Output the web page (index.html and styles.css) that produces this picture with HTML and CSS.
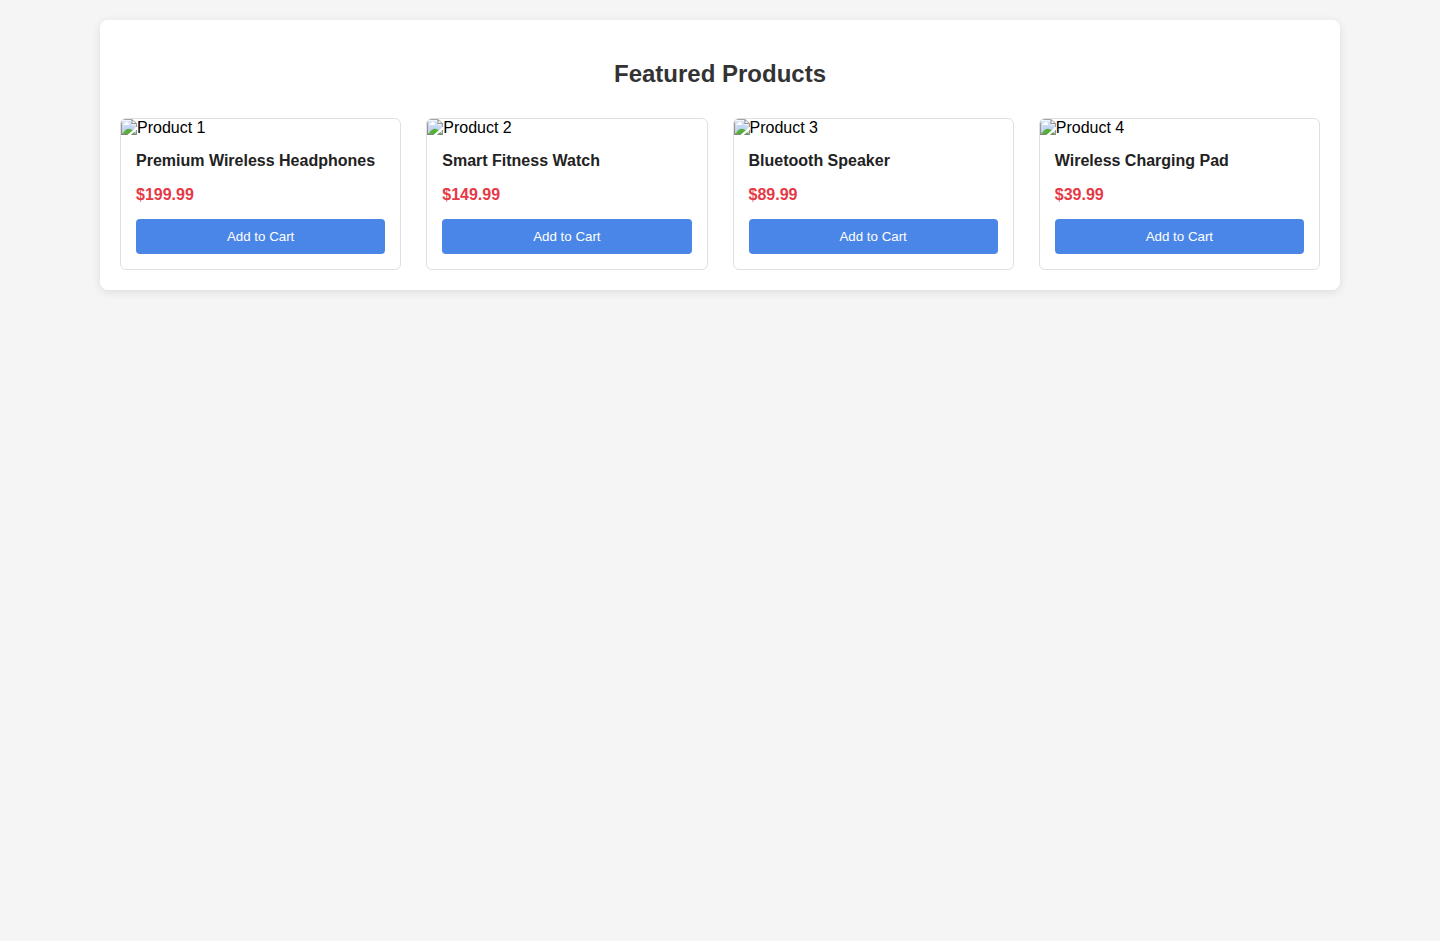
FILE: index.html
```html
<!DOCTYPE html>
<html lang="en">
<head>
<meta charset="UTF-8">
<meta name="viewport" content="width=device-width, initial-scale=1.0">
<title>Featured Products</title>
<link rel="stylesheet" href="styles.css">
</head>
<body>
<main class="container">
  <h2 class="title">Featured Products</h2>
  <div class="grid">
    <article class="card">
      <img class="card-image" src="product1.jpg" alt="Product 1">
      <div class="card-info">
        <h3 class="card-name">Premium Wireless Headphones</h3>
        <p class="card-price">$199.99</p>
        <button class="card-button" type="button">Add to Cart</button>
      </div>
    </article>
    <article class="card">
      <img class="card-image" src="product2.jpg" alt="Product 2">
      <div class="card-info">
        <h3 class="card-name">Smart Fitness Watch</h3>
        <p class="card-price">$149.99</p>
        <button class="card-button" type="button">Add to Cart</button>
      </div>
    </article>
    <article class="card">
      <img class="card-image" src="product3.jpg" alt="Product 3">
      <div class="card-info">
        <h3 class="card-name">Bluetooth Speaker</h3>
        <p class="card-price">$89.99</p>
        <button class="card-button" type="button">Add to Cart</button>
      </div>
    </article>
    <article class="card">
      <img class="card-image" src="product4.jpg" alt="Product 4">
      <div class="card-info">
        <h3 class="card-name">Wireless Charging Pad</h3>
        <p class="card-price">$39.99</p>
        <button class="card-button" type="button">Add to Cart</button>
      </div>
    </article>
  </div>
</main>
</body>
</html>
```
FILE: styles.css
```css
body {
  margin: 0;
  padding: 20px;
  background: #f5f5f5;
  font-family: "Liberation Sans", Arial, sans-serif;
}

.container {
  max-width: 1200px;
  margin: 0 auto;
  padding: 20px;
  background: #fff;
  border-radius: 8px;
  box-shadow: 0 2px 10px rgba(0, 0, 0, 0.1);
}

.title {
  margin: 20px 0 30px;
  font-size: 24px;
  text-align: center;
  color: #333;
}

.grid {
  display: grid;
  grid-template-columns: repeat(auto-fill, minmax(250px, 1fr));
  gap: 25px;
}

.card {
  border: 1px solid #e0e0e0;
  border-radius: 6px;
  overflow: hidden;
}

.card-image {
  display: block;
  width: 100%;
  object-fit: cover;
}

.card-info {
  padding: 15px;
}

.card-name {
  margin: 0 0 16px;
  font-size: 16px;
  color: #222;
}

.card-price {
  margin: 0 0 15px;
  font-size: 16px;
  font-weight: bold;
  color: #e63946;
}

.card-button {
  display: block;
  width: 100%;
  padding: 10px;
  border: none;
  border-radius: 4px;
  background: #4a86e8;
  color: #fff;
  font-family: inherit;
  cursor: pointer;
}
```
